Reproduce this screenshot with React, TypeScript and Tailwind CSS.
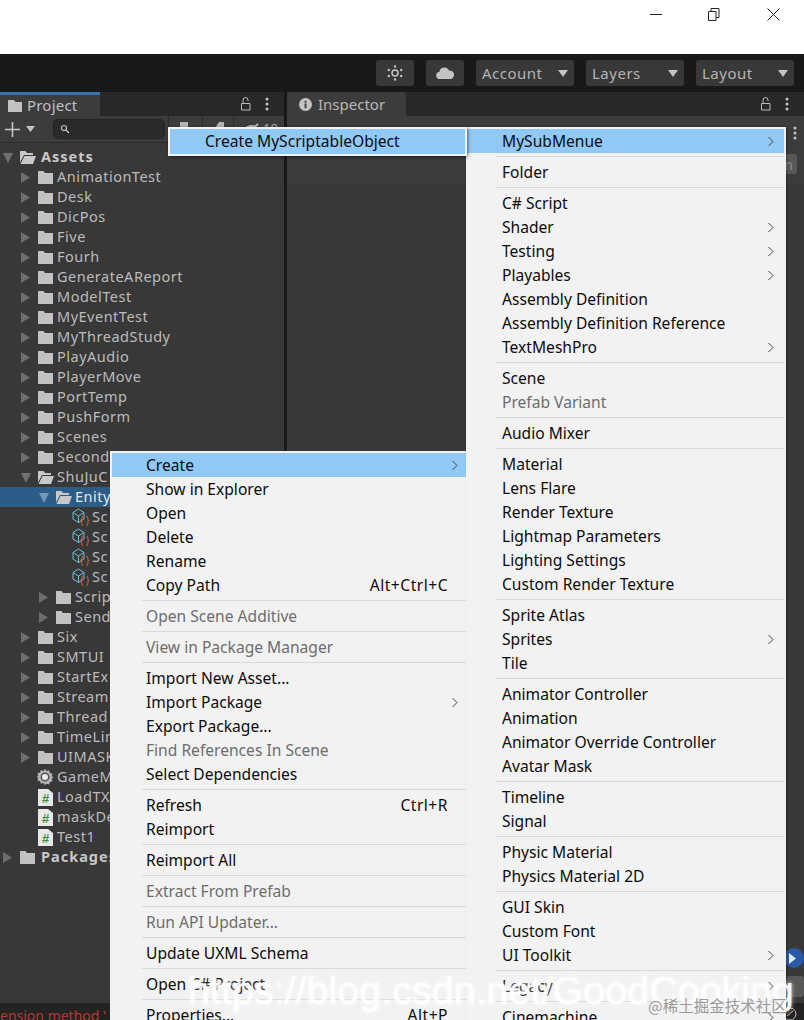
import React from "react";

const Folder = ({ open = false }: { open?: boolean }) =>
  open ? (
    <svg width="16" height="13" viewBox="0 0 16 13" className="shrink-0">
      <path d="M0 0h5.500L7 2h6v2H4L0 11.500zM4.500 5H16l-3 8H.5z" fill="#c8c8c8" />
    </svg>
  ) : (
    <svg width="15" height="13" viewBox="0 0 15 13" className="shrink-0">
      <path d="M0 0h5.500L7 2h8v11H0z" fill="#c2c2c2" />
    </svg>
  );

const Tri = ({ open = false, light = false }: { open?: boolean; light?: boolean }) => (
  <svg width="10" height="11" viewBox="0 0 10 11" className="shrink-0">
    {open ? <path d="M0 1h10L5 11z" fill={light ? "#6f9abb" : "#707070"} /> : <path d="M0 0l9 5.500-9 5.500z" fill="#6e6e6e" />}
  </svg>
);

const Cube = () => (
  <svg width="18" height="18" viewBox="0 0 18 18" className="shrink-0" fill="none">
    <path d="M1 4.500L6.500 1 12 4.500V11l-5.500 3.500L1 11zM1 4.500l5.500 3.500L12 4.500M6.500 8v6.500" stroke="#6cc0d6" strokeWidth="1" />
    <path
      d="M11 8c-1.800 0-.8 3.500-2 4.500 1.200 1-.2 5 2 5M14.500 8c1.800 0 .8 3.500 2 4.500-1.200 1 .2 5-2 5"
      stroke="#e0552e"
      strokeWidth="1.100"
    />
  </svg>
);

const Script = () => (
  <svg width="15" height="17" viewBox="0 0 15 17" className="shrink-0">
    <path d="M0 0h10l5 4v13H0z" fill="#e8e8e8" />
    <text x="7.500" y="14" fontSize="13" fontWeight="700" textAnchor="middle" fill="#3c8a3c" fontFamily="Liberation Sans, sans-serif">
      #
    </text>
  </svg>
);

const Gear = () => (
  <svg width="18" height="18" viewBox="0 0 24 24" className="-ml-[2px] shrink-0">
    <path
      d="M12 1l2 3 3.500-1 1 3.500 3.500 1-1 3.500 2.500 1.500-2.500 1.500 1 3.500-3.500 1-1 3.500-3.500-1L12 23l-2-3-3.500 1-1-3.500-3.500-1 1-3.500L.5 12 3 10.500 2 7l3.500-1 1-3.500L10 4z"
      fill="#b5b5b5"
    />
    <circle cx="12" cy="12" r="5" fill="#ececec" stroke="#555" strokeWidth="2" />
  </svg>
);

type Node = { label: string; depth: number; kind: "f" | "o" | "c" | "g" | "s"; bold?: boolean; arrow?: "c" | "o" | "n"; sel?: boolean };

const tree: Node[] = [
  { label: "Assets", depth: 0, kind: "o", bold: true, arrow: "o" },
  ...["AnimationTest", "Desk", "DicPos", "Five", "Fourh", "GenerateAReport", "ModelTest", "MyEventTest", "MyThreadStudy", "PlayAudio", "PlayerMove", "PortTemp", "PushForm", "Scenes", "Second"].map(
    (label): Node => ({ label, depth: 1, kind: "f", arrow: "c" })
  ),
  { label: "ShuJuC", depth: 1, kind: "o", arrow: "o" },
  { label: "Enity", depth: 2, kind: "o", arrow: "o", sel: true },
  { label: "Sc", depth: 3, kind: "c", arrow: "n" },
  { label: "Sc", depth: 3, kind: "c", arrow: "n" },
  { label: "Sc", depth: 3, kind: "c", arrow: "n" },
  { label: "Sc", depth: 3, kind: "c", arrow: "n" },
  { label: "Scrip", depth: 2, kind: "f", arrow: "c" },
  { label: "Send", depth: 2, kind: "f", arrow: "c" },
  ...["Six", "SMTUI", "StartEx", "Stream", "Thread", "TimeLin", "UIMASK"].map((label): Node => ({ label, depth: 1, kind: "f", arrow: "c" })),
  { label: "GameM", depth: 1, kind: "g", arrow: "n" },
  { label: "LoadTX", depth: 1, kind: "s", arrow: "n" },
  { label: "maskDe", depth: 1, kind: "s", arrow: "n" },
  { label: "Test1", depth: 1, kind: "s", arrow: "n" },
  { label: "Packages", depth: 0, kind: "f", bold: true, arrow: "c" },
];

const pad: Record<number, string> = { 0: "pl-[3px]", 1: "pl-[21px]", 2: "pl-[39px]", 3: "pl-[55px]" };

const TreeRow = ({ n }: { n: Node }) => (
  <div className={`flex h-[20px] items-center ${pad[n.depth]} ${n.sel ? "bg-[#2c5d87]" : ""}`}>
    <span className="flex w-[17px] shrink-0 items-center">{n.arrow !== "n" && <Tri open={n.arrow === "o"} light={n.sel} />}</span>
    <span className={`flex shrink-0 items-center ${n.depth === 0 ? "w-[21px]" : n.kind === "c" ? "w-[20px]" : "w-[19px]"}`}>
      {n.kind === "f" && <Folder />}
      {n.kind === "o" && <Folder open />}
      {n.kind === "c" && <Cube />}
      {n.kind === "g" && <Gear />}
      {n.kind === "s" && <Script />}
    </span>
    <span className={`-mt-[2px] whitespace-nowrap ${n.bold ? "font-bold tracking-[1px] text-[#c8c8c8]" : n.sel ? "tracking-[0.5px] text-[#e8e8e8]" : "tracking-[0.5px] text-[#bcbcbc]"}`}>{n.label}</span>
  </div>
);

const Chev = () => (
  <svg width="6" height="11" viewBox="0 0 6 11" className="shrink-0" fill="none">
    <path d="M.5 1l4.500 4.500L.5 10" stroke="#444" strokeWidth="1" />
  </svg>
);

type Item =
  | { sep: true }
  | { sep?: false; t: string; sub?: boolean; dis?: boolean; hi?: boolean; key?: string };

const s: Item = { sep: true };

const leftItems: Item[] = [
  { t: "Create", hi: true, sub: true },
  { t: "Show in Explorer" },
  { t: "Open" },
  { t: "Delete" },
  { t: "Rename" },
  { t: "Copy Path", key: "Alt+Ctrl+C" },
  s,
  { t: "Open Scene Additive", dis: true },
  s,
  { t: "View in Package Manager", dis: true },
  s,
  { t: "Import New Asset..." },
  { t: "Import Package", sub: true },
  { t: "Export Package..." },
  { t: "Find References In Scene", dis: true },
  { t: "Select Dependencies" },
  s,
  { t: "Refresh", key: "Ctrl+R" },
  { t: "Reimport" },
  s,
  { t: "Reimport All" },
  s,
  { t: "Extract From Prefab", dis: true },
  s,
  { t: "Run API Updater...", dis: true },
  s,
  { t: "Update UXML Schema" },
  s,
  { t: "Open C# Project" },
  s,
  { t: "Properties...", key: "Alt+P" },
];

const rightItems: Item[] = [
  { t: "MySubMenue", hi: true, sub: true },
  s,
  { t: "Folder" },
  s,
  { t: "C# Script" },
  { t: "Shader", sub: true },
  { t: "Testing", sub: true },
  { t: "Playables", sub: true },
  { t: "Assembly Definition" },
  { t: "Assembly Definition Reference" },
  { t: "TextMeshPro", sub: true },
  s,
  { t: "Scene" },
  { t: "Prefab Variant", dis: true },
  s,
  { t: "Audio Mixer" },
  s,
  { t: "Material" },
  { t: "Lens Flare" },
  { t: "Render Texture" },
  { t: "Lightmap Parameters" },
  { t: "Lighting Settings" },
  { t: "Custom Render Texture" },
  s,
  { t: "Sprite Atlas" },
  { t: "Sprites", sub: true },
  { t: "Tile" },
  s,
  { t: "Animator Controller" },
  { t: "Animation" },
  { t: "Animator Override Controller" },
  { t: "Avatar Mask" },
  s,
  { t: "Timeline" },
  { t: "Signal" },
  s,
  { t: "Physic Material" },
  { t: "Physics Material 2D" },
  s,
  { t: "GUI Skin" },
  { t: "Custom Font" },
  { t: "UI Toolkit", sub: true },
  s,
  { t: "Legacy", sub: true },
  s,
  { t: "Cinemachine", sub: true },
];

const MenuList = ({ items, textPad, rowPad }: { items: Item[]; textPad: string; rowPad: string }) => (
  <>
    {items.map((it, i) =>
      it.sep ? (
        <div key={i} className="flex h-[7px] shrink-0 items-center pl-[30px]">
          <div className="h-px w-full bg-[#d8d8d8]" />
        </div>
      ) : (
        <div key={i} className={`flex h-[24px] shrink-0 items-center ${rowPad} ${textPad} ${it.hi ? "bg-[#90c8f6]" : ""}`}>
          <span className={`flex-1 pt-[2px] whitespace-nowrap ${it.dis ? "text-[#6d6d6d]" : "text-[#0c0c0c]"}`}>{it.t}</span>
          {it.key && <span className="mr-[10px] pt-[2px] tracking-[0.5px] text-[#0c0c0c]">{it.key}</span>}
          {it.sub && <Chev />}
        </div>
      )
    )}
  </>
);

const ToolBtn = ({ label }: { label: string }) => (
  <div className="flex h-[26px] w-[98px] items-center justify-between rounded-[3px] bg-[#383838] px-[6px] tracking-[0.5px] text-[#b4b4b4]">
    <span className="text-[15px]">{label}</span>
    <svg width="10" height="7" viewBox="0 0 10 7">
      <path d="M0 0h10L5 7z" fill="#c4c4c4" />
    </svg>
  </div>
);

const Lock = () => (
  <svg width="10" height="14" viewBox="0 0 10 14" fill="none" stroke="#bdbdbd" strokeWidth="1">
    <path d="M2 6V3a2.500 2.500 0 0 1 5 0v1" />
    <path d="M.5 6.500h8.500v6.500H.5z" />
  </svg>
);

const Dots = () => (
  <svg width="4" height="14" viewBox="0 0 4 14" fill="#c4c4c4">
    <circle cx="2" cy="2" r="1.500" />
    <circle cx="2" cy="7" r="1.500" />
    <circle cx="2" cy="12" r="1.500" />
  </svg>
);

export default function App() {
  return (
    <div className="relative flex h-[1020px] w-[804px] flex-col overflow-hidden bg-white font-['Noto_Sans','Open_Sans',sans-serif] text-[15.6px]">
      {/* title bar */}
      <div className="flex h-[54px] shrink-0 items-start justify-end bg-white">
        <div className="flex h-[28px] w-[59px] items-center justify-center">
          <div className="h-px w-[12px] bg-[#222]" />
        </div>
        <div className="flex h-[28px] w-[57px] items-center justify-center">
          <svg width="12" height="13" viewBox="0 0 12 13" fill="none" stroke="#222" strokeWidth="1">
            <path d="M.5 3.500h7.500v9H.5zM3 3.500V.5h8v9H8" />
          </svg>
        </div>
        <div className="flex h-[28px] w-[62px] items-center justify-center">
          <svg width="13" height="13" viewBox="0 0 13 13" fill="none" stroke="#222" strokeWidth="1">
            <path d="M.5.5l12 12M12.500.5l-12 12" />
          </svg>
        </div>
      </div>

      {/* toolbar */}
      <div className="flex h-[38px] shrink-0 items-start justify-end gap-[12px] bg-[#191919] pt-[6px] pr-[10px]">
        <div className="flex h-[26px] w-[38px] items-center justify-center rounded-[3px] bg-[#383838]">
          <svg width="16" height="16" viewBox="0 0 16 16" fill="#c4c4c4">
            <circle cx="8" cy="8" r="3" fill="none" stroke="#c4c4c4" strokeWidth="1.500" />
            <circle cx="8" cy="1.500" r="1.200" />
            <circle cx="8" cy="14.500" r="1.200" />
            <circle cx="1.800" cy="5" r="1.200" />
            <circle cx="14.200" cy="5" r="1.200" />
            <circle cx="1.800" cy="11" r="1.200" />
            <circle cx="14.200" cy="11" r="1.200" />
          </svg>
        </div>
        <div className="flex h-[26px] w-[38px] items-center justify-center rounded-[3px] bg-[#383838]">
          <svg width="18" height="12" viewBox="0 0 18 12" fill="#c4c4c4">
            <path d="M4 12a3.500 3.500 0 0 1-.6-7A5 5 0 0 1 13 3.500 4.200 4.200 0 0 1 14.500 12z" />
          </svg>
        </div>
        <ToolBtn label="Account" />
        <ToolBtn label="Layers" />
        <ToolBtn label="Layout" />
      </div>

      {/* panels */}
      <div className="flex min-h-0 flex-1 bg-[#191919]">
        {/* project */}
        <div className="flex w-[284px] shrink-0 flex-col">
          <div className="flex h-[24px] shrink-0 items-stretch bg-[#282828]">
            <div className="flex w-[100px] items-center gap-[5px] border-t-[3px] border-[#3a72b0] bg-[#3c3c3c] pl-[8px] text-[15px] text-[#c0c0c0]">
              <svg width="14" height="12" viewBox="0 0 14 12" className="shrink-0">
                <path d="M0 0h6l1.500 2H14v10H0z" fill="#c2c2c2" />
              </svg>
              <span className="tracking-[0.2px]">Project</span>
            </div>
            <div className="flex flex-1 items-center justify-end gap-[14px] pr-[15px]">
              <Lock />
              <Dots />
            </div>
          </div>
          <div className="flex h-[27px] shrink-0 items-center border-b border-[#2a2a2a] bg-[#3c3c3c] pl-[5px]">
            <svg width="15" height="15" viewBox="0 0 15 15" className="shrink-0" fill="none" stroke="#c8c8c8" strokeWidth="1.600">
              <path d="M7.500 0v15M0 7.500h15" />
            </svg>
            <svg width="9" height="6" viewBox="0 0 9 6" className="mr-[18px] ml-[6px] shrink-0">
              <path d="M0 0h9L4.500 6z" fill="#c4c4c4" />
            </svg>
            <div className="flex h-[20px] w-[112px] shrink-0 items-center rounded-[5px] border border-[#222] bg-[#2a2a2a] pl-[6px]">
              <svg width="10" height="10" viewBox="0 0 10 10" fill="none" stroke="#c4c4c4" strokeWidth="1.200">
                <circle cx="4" cy="4" r="2.500" />
                <path d="M6 6l3 3" />
              </svg>
            </div>
            <div className="ml-[3px] flex h-full flex-1 items-stretch text-[#b0b0b0]">
              <div className="flex w-[34px] items-center justify-center border-l border-[#2c2c2c]">
                <svg width="13" height="15" viewBox="0 0 13 15" fill="#b5b5b5">
                  <path d="M1 0h8v6h4v3l-4 6H1z" />
                </svg>
              </div>
              <div className="flex w-[31px] items-center justify-center border-l border-[#2c2c2c]">
                <svg width="11" height="14" viewBox="0 0 11 14" fill="#b5b5b5">
                  <path d="M6 0h5v10l-5 4-6-5z" />
                </svg>
              </div>
              <div className="flex flex-1 items-center gap-[3px] border-l border-[#2c2c2c] pl-[9px] text-[13px]">
                <svg width="17" height="13" viewBox="0 0 17 13" fill="none" stroke="#b5b5b5" strokeWidth="2">
                  <path d="M1 7c3-4 8-5 12-3M3 12L15 1" />
                </svg>
                <span>10</span>
              </div>
            </div>
          </div>
          <div className="flex-1 overflow-hidden bg-[#383838] pt-[4px] text-[14.500px] leading-none">
            {tree.map((n, i) => (
              <TreeRow key={i} n={n} />
            ))}
          </div>
        </div>

        <div className="w-[3px] shrink-0 bg-[#191919]" />

        {/* inspector */}
        <div className="flex min-w-0 flex-1 flex-col">
          <div className="flex h-[24px] shrink-0 items-stretch bg-[#282828]">
            <div className="flex w-[119px] items-center gap-[6px] rounded-t-[3px] bg-[#3c3c3c] pl-[12px] text-[15px] text-[#b8b8b8]">
              <svg width="13" height="13" viewBox="0 0 14 14" className="shrink-0">
                <circle cx="7" cy="7" r="7" fill="#c4c4c4" />
                <path d="M6 3h2v2H6zM6 6h2v5H6z" fill="#3c3c3c" />
              </svg>
              <span>Inspector</span>
            </div>
            <div className="flex flex-1 items-center justify-end gap-[14px] pr-[15px]">
              <Lock />
              <Dots />
            </div>
          </div>
          <div className="flex h-[68px] shrink-0 flex-col items-end gap-[14px] bg-[#3c3c3c] pt-[10px] pr-[7px]">
            <Dots />
            <div className="flex h-[20px] w-[20px] items-center justify-end rounded-[3px] bg-[#585858] pr-[4px] text-[14px] text-[#8a8a8a]">n</div>
          </div>
          <div className="flex flex-1 flex-col items-end bg-[#383838] pt-[764px]">
            <div className="flex h-[20px] w-[20px] items-center justify-end overflow-hidden rounded-full bg-[#2a5aa5] pr-[8px]">
              <svg width="7" height="11" viewBox="0 0 7 11" className="shrink-0">
                <path d="M0 0l7 5.500-7 5.500z" fill="#dde8f4" />
              </svg>
            </div>
            <div className="mt-[8px] h-[21px] w-[18px] rounded-[3px] bg-[#585858]" />
          </div>
        </div>
      </div>

      {/* status bar */}
      <div className="flex h-[17px] shrink-0 items-start justify-between overflow-hidden bg-[#232323] pt-[4px] text-[14px] leading-[18px] whitespace-nowrap text-[#b83a34]">
        <span>ension method '</span>
        <svg width="14" height="14" viewBox="0 0 14 14" fill="none" stroke="#bdbdbd" strokeWidth="1" className="mr-[7px]">
          <circle cx="7" cy="7" r="6" />
          <path d="M4 9l6-5" />
        </svg>
      </div>

      {/* context menu */}
      <div className="absolute top-[451px] left-[110px] flex h-[600px] w-[356px] flex-col bg-[#f2f2f2] pt-[2px] pl-[2px]">
        <MenuList items={leftItems} textPad="pl-[34px]" rowPad="pr-[8px]" />
      </div>

      {/* create menu */}
      <div className="absolute top-[127px] left-[466px] flex h-[920px] w-[320px] flex-col border-t-[2px] border-r-[2px] border-[#f2f2f2] bg-[#f2f2f2] shadow-[1px_0_2px_rgba(0,0,0,0.3)]">
        <MenuList items={rightItems} textPad="pl-[36px]" rowPad="pr-[10px]" />
      </div>

      {/* submenu flyout */}
      <div className="absolute top-[127px] left-[168px] h-[29px] w-[299px] border-[2px] border-[#f2f2f2] shadow-[1px_1px_3px_rgba(0,0,0,0.5)]">
        <div className="flex h-[25px] items-center bg-[#90c8f6] pl-[35px] whitespace-nowrap text-[#0c0c0c]">Create MyScriptableObject</div>
      </div>

      {/* watermark */}
      <div className="pointer-events-none absolute top-[965px] left-[188px] font-['Liberation_Sans',sans-serif] text-[39.5px] leading-[50px] whitespace-nowrap text-white/90 [text-shadow:0_0_4px_rgba(255,255,255,0.8)]">
        https://blog.csdn.net/GoodCooking
      </div>
      <div className="pointer-events-none absolute top-[994px] left-[648px] font-['Noto_Sans_CJK_SC',sans-serif] text-[15.5px] leading-[22px] whitespace-nowrap text-[#9a9a9a]">
        @稀土掘金技术社区
      </div>
    </div>
  );
}
